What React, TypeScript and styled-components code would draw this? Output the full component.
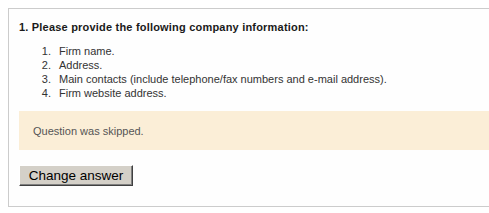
import React from 'react';
import styled, { createGlobalStyle } from 'styled-components';

const GlobalStyle = createGlobalStyle`
	html, body {
		margin: 0;
		padding: 0;
		background: #ffffff;
		overflow: hidden;
	}
	body {
		padding: 8px;
		font-family: 'Liberation Sans', Arial, sans-serif;
	}
`;

const items = [
	'Firm name.',
	'Address.',
	'Main contacts (include telephone/fax numbers and e-mail address).',
	'Firm website address.',
];

const App: React.FC = () => {
	return (
		<>
			<GlobalStyle />
			<QuestionBox>
				<Heading>1. Please provide the following company information:</Heading>
				<List>
					{items.map((item) => (
						<ListItem key={item}>{item}</ListItem>
					))}
				</List>
				<SkippedNotice>Question was skipped.</SkippedNotice>
				<ChangeButton type='button'>Change answer</ChangeButton>
			</QuestionBox>
		</>
	);
};

export default App;

export const QuestionBox = styled.div`
	width: 520px;
	box-sizing: border-box;
	border: 1px solid #cccccc;
	background: #fefefe;
	padding: 11px 0 20px 10px;
`;

export const Heading = styled.div`
	font-weight: bold;
	font-size: 11px;
	letter-spacing: 0.2px;
	line-height: 14px;
	color: #1a1a1a;
`;

export const List = styled.ol`
	margin: 10px 0 0 0;
	padding: 0 0 0 35px;
	font-size: 11px;
	line-height: 14px;
	color: #333333;
`;

export const ListItem = styled.li`
	padding-left: 5px;
`;

export const SkippedNotice = styled.div`
	margin-top: 11px;
	height: 39px;
	display: flex;
	align-items: center;
	padding-left: 14px;
	background: #fbeed7;
	font-size: 11px;
	color: #555555;
`;

export const ChangeButton = styled.button`
	display: block;
	margin-top: 15px;
	width: 114px;
	height: 21px;
	padding: 0;
	background: #d4d0c8;
	border: 1px solid;
	border-color: #ffffff #404040 #404040 #ffffff;
	box-shadow: inset -1px -1px 0 #808080;
	font-family: 'Liberation Sans', Arial, sans-serif;
	font-size: 13.5px;
	color: #000000;
`;
